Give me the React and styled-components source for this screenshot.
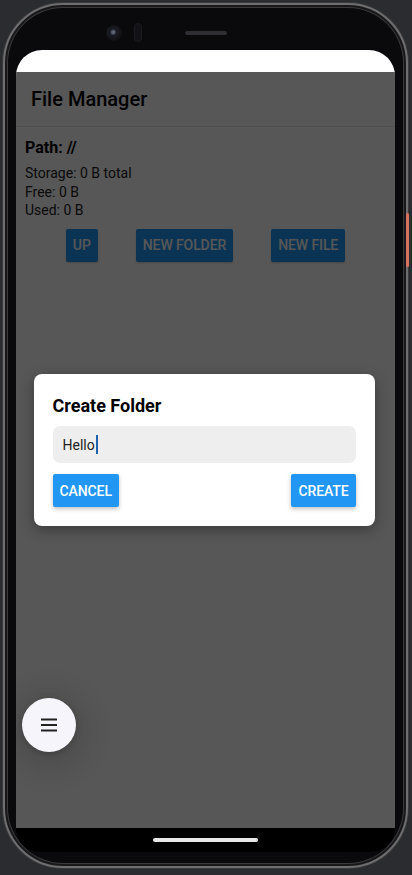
import React from 'react';
import styled, {createGlobalStyle} from "styled-components";

const GlobalStyle = createGlobalStyle`
  html, body {
    margin: 0;
    padding: 0;
    background: #2b2c2f;
    font-family: Roboto, "Noto Sans", Arial, sans-serif;
  }
  * {
    box-sizing: border-box;
  }
`;

const App = () => {
    return (
        <>
            <GlobalStyle/>
            <Page>
                <Phone>
                    <PowerKey/>
                    <TopBezel>
                        <Camera/>
                        <Sensor/>
                        <Speaker/>
                    </TopBezel>
                    <Screen>
                        <StatusBar/>
                        <AppArea>
                            <Header>File Manager</Header>
                            <Content>
                                <PathText>Path: //</PathText>
                                <InfoLine>Storage: 0 B total</InfoLine>
                                <InfoLine>Free: 0 B</InfoLine>
                                <InfoLine>Used: 0 B</InfoLine>
                                <Actions>
                                    <Button>Up</Button>
                                    <Button>New Folder</Button>
                                    <Button>New File</Button>
                                </Actions>
                            </Content>
                            <Overlay>
                                <Dialog>
                                    <DialogTitle>Create Folder</DialogTitle>
                                    <Field>
                                        Hello<Caret/>
                                    </Field>
                                    <DialogActions>
                                        <Button raised>Cancel</Button>
                                        <Button raised>Create</Button>
                                    </DialogActions>
                                </Dialog>
                            </Overlay>
                            <Fab>
                                <svg width="16" height="14" viewBox="0 0 16 14">
                                    <rect x="0" y="0.5" width="16" height="2" fill="#222"/>
                                    <rect x="0" y="6" width="16" height="2" fill="#222"/>
                                    <rect x="0" y="11.5" width="16" height="2" fill="#222"/>
                                </svg>
                            </Fab>
                        </AppArea>
                        <NavBar>
                            <HomeIndicator/>
                        </NavBar>
                    </Screen>
                </Phone>
            </Page>
        </>
    );
};

const Page = styled.div`
  width: 412px;
  height: 875px;
  padding: 3px 4px 7px 3px;
`;

const Phone = styled.div`
  position: relative;
  height: 100%;
  display: flex;
  flex-direction: column;
  padding: 0 11px 14px 11px;
  border-radius: 60px;
  background: #0a090c;
  border: 2px solid #6e6e70;
  box-shadow: inset 0 0 0 2px #18181b, inset 0 0 0 3px #3a3a3d, 0 0 0 1px #3a3a3d;
`;

const PowerKey = styled.div`
  position: absolute;
  right: -3px;
  top: 208px;
  width: 3px;
  height: 54px;
  border-radius: 2px;
  background: #d9735f;
`;

const TopBezel = styled.div`
  height: 45px;
  display: flex;
  align-items: center;
  padding: 10px 0 0 90px;
`;

const Camera = styled.div`
  width: 16px;
  height: 16px;
  border-radius: 50%;
  background: radial-gradient(circle at 45% 45%, #5a6070 0 1.5px, #1c1d24 3px, #111116 8px);
`;

const Sensor = styled.div`
  width: 8px;
  height: 19px;
  margin-left: 12px;
  border-radius: 4px;
  background: #121216;
  border: 1px solid #1b1b20;
`;

const Speaker = styled.div`
  width: 42px;
  height: 4px;
  margin-left: 43px;
  border-radius: 2px;
  background: #2e2e33;
`;

const Screen = styled.div`
  flex: 1;
  display: flex;
  flex-direction: column;
  border-radius: 26px 26px 24px 24px;
  overflow: hidden;
`;

const StatusBar = styled.div`
  height: 22px;
  background: #ffffff;
`;

const AppArea = styled.div`
  position: relative;
  flex: 1;
  background: #ffffff;
`;

const Header = styled.div`
  height: 55px;
  display: flex;
  align-items: center;
  padding: 0 15px;
  font-size: 20px;
  font-weight: 500;
  color: #000;
  border-bottom: 1px solid #e6e6e6;
`;

const Content = styled.div`
  padding: 10px 9px;
`;

const PathText = styled.div`
  font-size: 16px;
  font-weight: 700;
  line-height: 22px;
  color: #000;
  margin-bottom: 5px;
`;

const InfoLine = styled.div`
  font-size: 14px;
  line-height: 18.5px;
  color: #222;
`;

const Actions = styled.div`
  display: flex;
  justify-content: center;
  gap: 38px;
  margin-top: 9px;
`;

const Button = styled.div`
  height: 33px;
  padding: 0 7px;
  display: flex;
  align-items: center;
  justify-content: center;
  background: #2196f3;
  color: #fff;
  font-size: 14px;
  font-weight: 500;
  letter-spacing: -0.1px;
  text-transform: uppercase;
  border-radius: 2px;
  box-shadow: ${p => p.raised ? "0 2px 4px rgba(0,0,0,0.25)" : "0 1px 2px rgba(0,0,0,0.2)"};
`;

const Overlay = styled.div`
  position: absolute;
  inset: 0;
  display: flex;
  align-items: center;
  justify-content: center;
  background: rgba(0, 0, 0, 0.66);
`;

const Dialog = styled.div`
  width: 341px;
  margin-left: -3px;
  padding: 20px 19px 19px;
  background: #fff;
  border-radius: 8px;
  box-shadow: 0 4px 14px rgba(0,0,0,0.35);
`;

const DialogTitle = styled.div`
  font-size: 18px;
  font-weight: 700;
  line-height: 24px;
  color: #000;
  margin-bottom: 8px;
`;

const Field = styled.div`
  height: 37px;
  display: flex;
  align-items: center;
  padding: 0 10px;
  background: #eeeeee;
  border-radius: 7px;
  font-size: 14px;
  color: #222;
`;

const Caret = styled.span`
  display: inline-block;
  width: 2px;
  height: 19px;
  margin-left: 1px;
  background: #1e63b0;
`;

const DialogActions = styled.div`
  display: flex;
  justify-content: space-between;
  margin-top: 11px;
`;

const Fab = styled.div`
  position: absolute;
  left: 6px;
  bottom: 76px;
  width: 54px;
  height: 54px;
  border-radius: 50%;
  display: flex;
  align-items: center;
  justify-content: center;
  background: #f6f5fb;
  box-shadow: 0 6px 26px 14px rgba(0,0,0,0.1), 0 2px 6px rgba(0,0,0,0.2);
`;

const NavBar = styled.div`
  height: 24px;
  display: flex;
  align-items: center;
  justify-content: center;
  background: #000;
`;

const HomeIndicator = styled.div`
  width: 105px;
  height: 4px;
  border-radius: 2px;
  background: #e8e8e8;
`;

export default App;
